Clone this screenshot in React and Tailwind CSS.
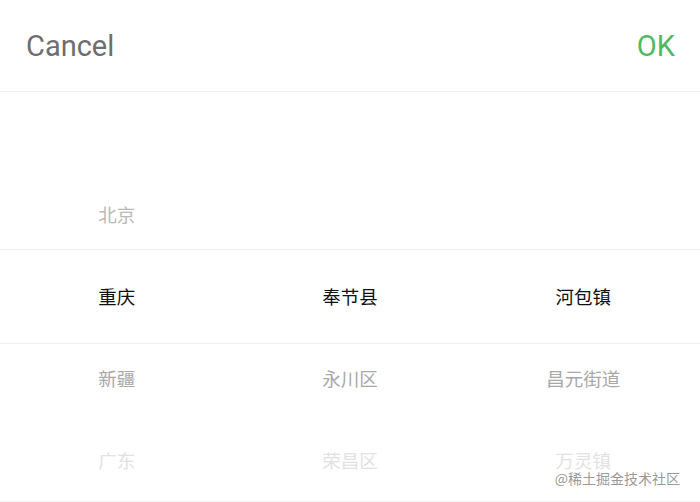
import React from 'react';

const columns = [
    ['', '北京', '重庆', '新疆', '广东'],
    ['', '', '奉节县', '永川区', '荣昌区'],
    ['', '', '河包镇', '昌元街道', '万灵镇'],
];

// row index -> text colour (index 2 is the selected row)
const rowColors = ['text-[#cccccc]', 'text-[#b9b9b9]', 'text-[#111111]', 'text-[#a9a9a9]', 'text-[#e2e2e2]'];

const App = () => {
    return (
        <div className="w-[700px] h-[502px] bg-white overflow-hidden font-['Roboto','Noto_Sans_CJK_SC',sans-serif]">
            <div className="h-[92px] flex items-center justify-between pl-[26px] pr-[25px] pt-[2px] border-b border-[#efefef]">
                <button className="text-[29px] text-[#6e6e6e] leading-none">Cancel</button>
                <button className="text-[29px] text-[#4fb862] leading-none">OK</button>
            </div>

            <div className="relative h-[410px]">
                <div className="grid grid-cols-3">
                    {columns.map((col, ci) => (
                        <div key={ci} className="flex flex-col">
                            {col.map((item, ri) => (
                                <div key={ri} className={`h-[82px] flex items-center justify-center text-[18.5px] font-['Noto_Sans_CJK_SC',sans-serif] ${rowColors[ri]}`}>
                                    {item}
                                </div>
                            ))}
                        </div>
                    ))}
                </div>

                {/* selection indicator */}
                <div className="absolute left-0 right-0 top-[157px] h-[95px] border-y border-[#eeeeee] pointer-events-none" />

                <div className="absolute right-[20px] bottom-[17px] text-[14px] text-[#9a9a9a] font-['Noto_Sans_CJK_SC',sans-serif] leading-none">
                    @稀土掘金技术社区
                </div>
                <div className="absolute left-0 right-0 bottom-0 border-b border-[#f0f0f0]" />
            </div>
        </div>
    );
};

export default App;
